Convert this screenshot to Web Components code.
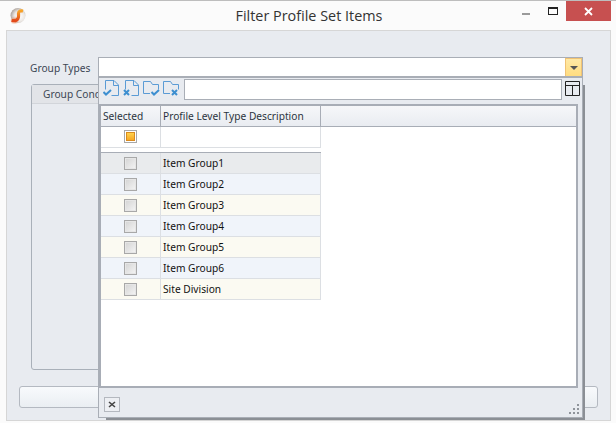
<!DOCTYPE html>
<html>
<head>
<meta charset="utf-8">
<title>Filter Profile Set Items</title>
<style>
    html, body { margin: 0; padding: 0; background: #fff; }
    body { font-family: "Noto Sans", "DejaVu Sans", sans-serif; font-size: 10.2px; color: #222; }
</style>
</head>
<body>
<filter-window title-text="Filter Profile Set Items"></filter-window>

<script>
class TitleBar extends HTMLElement {
    constructor() {
        super();
        this.attachShadow({ mode: 'open' });
    }

    connectedCallback() {
        this.shadowRoot.innerHTML = `
            <style>
                :host {
                    display: flex;
                    height: 29px;
                    border-top: 1px solid #bdbdbd;
                    background: #fbfbfb;
                    align-items: flex-start;
                }
                .logo { margin: 5px 0 0 10px; width: 16px; height: 18px; flex: none; }
                .title {
                    flex: 1;
                    text-align: center;
                    font: 14.4px/16px "Open Sans", "Liberation Sans", sans-serif;
                    color: #333;
                    margin-top: 7px;
                    padding-left: 70px;
                }
                .btns { display: flex; margin-right: 5px; }
                .min { width: 8px; height: 2px; background: #9a9a9a; margin: 12px 18px 0 0; }
                .max { width: 8px; height: 5px; border: 1px solid #222; border-top-width: 2px; margin: 6px 8px 0 0; }
                .close { width: 45px; height: 20px; background: #c75050; display: flex; align-items: center; justify-content: center; }
            </style>
            <svg class="logo" viewBox="0 0 16 18">
                <defs>
                    <radialGradient id="ball" cx="0.6" cy="0.55" r="0.62">
                        <stop offset="0" stop-color="#fff"/>
                        <stop offset="0.55" stop-color="#ece8e4"/>
                        <stop offset="1" stop-color="#a89e97"/>
                    </radialGradient>
                    <linearGradient id="ess" x1="0" y1="0" x2="0" y2="1">
                        <stop offset="0" stop-color="#f8a526"/>
                        <stop offset="1" stop-color="#e2481a"/>
                    </linearGradient>
                    <radialGradient id="glow" cx="0.5" cy="0.5" r="0.5">
                        <stop offset="0" stop-color="#f0743a" stop-opacity="0.75"/>
                        <stop offset="1" stop-color="#f0743a" stop-opacity="0"/>
                    </radialGradient>
                </defs>
                <circle cx="8" cy="9.500" r="7.500" fill="url(#ball)"/>
                <circle cx="4.500" cy="14.500" r="4.500" fill="url(#glow)"/>
                <path d="M13 5C10.500 4.500 8.500 5 8.500 7.500c0 2 .5 3-.5 5-.7 1.500-3.500 2.500-6.500 2" fill="none" stroke="url(#ess)" stroke-width="3.200"/>
            </svg>
            <div class="title"><slot></slot></div>
            <div class="btns">
                <div class="min"></div>
                <div class="max"></div>
                <div class="close">
                    <svg width="9" height="9" viewBox="0 0 9 9"><path d="M1 1l7 7M8 1l-7 7" stroke="#fff" stroke-width="1.800"/></svg>
                </div>
            </div>
        `;
    }
}

class ComboField extends HTMLElement {
    constructor() {
        super();
        this.attachShadow({ mode: 'open' });
    }

    connectedCallback() {
        this.shadowRoot.innerHTML = `
            <style>
                :host { display: flex; align-items: center; height: 21px; }
                .label { width: 68px; flex: none; color: #3c4654; white-space: nowrap; }
                .box {
                    flex: 1;
                    height: 19px;
                    border: 1px solid #a9aeb6;
                    background: #fff;
                    display: flex;
                    justify-content: flex-end;
                }
                .drop {
                    width: 15px;
                    height: 17px;
                    border: 1px solid #f0c274;
                    background: linear-gradient(#ffe9a6, #ffdc80);
                    display: flex;
                    align-items: center;
                    justify-content: center;
                }
                .drop i {
                    display: block;
                    width: 0; height: 0;
                    border-left: 4px solid transparent;
                    border-right: 4px solid transparent;
                    border-top: 4px solid #555;
                }
            </style>
            <div class="label"><slot></slot></div>
            <div class="box"><div class="drop"><i></i></div></div>
        `;
    }
}

class GroupBox extends HTMLElement {
    constructor() {
        super();
        this.attachShadow({ mode: 'open' });
    }

    connectedCallback() {
        this.shadowRoot.innerHTML = `
            <style>
                :host {
                    display: block;
                    height: 284px;
                    border: 1px solid #a9b0b9;
                    border-radius: 3px 3px 0 3px;
                    color: #3c4654;
                }
                .tab {
                    height: 18px;
                    line-height: 19px;
                    padding-left: 11px;
                    background: #e2e4e8;
                    border-bottom: 1px solid #d2d5da;
                }
            </style>
            <div class="tab"><slot></slot></div>
        `;
    }
}

class ToolIcon extends HTMLElement {
    constructor() {
        super();
        this.attachShadow({ mode: 'open' });
    }

    connectedCallback() {
        const shape = this.getAttribute('shape');
        const mark = this.getAttribute('mark');
        const outline = shape === 'doc'
            ? 'M2.500 9.500V.5h8.500l4.500 4.500v10.500H8.500M10.500.5v5h5'
            : 'M7 13.500H.5V1.500h7l2 3h6v5';
        const x = shape === 'doc' ? 0 : 8;
        const sign = mark === 'ok'
            ? `M${x + 0.5} 12l2.500 2.500 5-4.500`
            : `M${x + 1} 10l5 5M${x + 6} 10l-5 5`;
        this.shadowRoot.innerHTML = `
            <style>
                :host { display: block; width: 17px; height: 17px; }
                svg { display: block; }
            </style>
            <svg width="17" height="17" viewBox="0 0 17 17">
                <path d="${outline}" fill="none" stroke="#5a9bd5" stroke-width="1"/>
                <path d="${sign}" fill="none" stroke="#3d8fd0" stroke-width="2"/>
            </svg>
        `;
    }
}

class GridCheck extends HTMLElement {
    constructor() {
        super();
        this.attachShadow({ mode: 'open' });
    }

    connectedCallback() {
        const mixed = this.hasAttribute('mixed');
        this.shadowRoot.innerHTML = `
            <style>
                :host {
                    display: block;
                    width: 11px;
                    height: 11px;
                    border: 1px solid #a8a8a8;
                    background: #fff;
                }
                div {
                    box-sizing: border-box;
                    width: ${mixed ? '9px' : '11px'};
                    height: ${mixed ? '9px' : '11px'};
                    margin: ${mixed ? '1px' : '0'};
                    ${mixed
                        ? 'background: linear-gradient(#ffd24d, #f7a823); border: 1px solid #d98a1e;'
                        : 'background: linear-gradient(135deg, #d6d6d6, #f2f2f2); border: 1px solid #e6e6e6;'}
                }
            </style>
            <div></div>
        `;
    }
}

class GridRow extends HTMLElement {
    constructor() {
        super();
        this.attachShadow({ mode: 'open' });
    }

    connectedCallback() {
        const bg = this.getAttribute('bg') || '#fff';
        this.shadowRoot.innerHTML = `
            <style>
                :host {
                    display: grid;
                    grid-template-columns: 60px 160px;
                    height: 21px;
                    color: #111;
                }
                .c {
                    box-sizing: border-box;
                    background: ${bg};
                    border-right: 1px solid #dcdfe3;
                    border-bottom: 1px solid #dcdfe3;
                    display: flex;
                    align-items: center;
                }
                .sel { justify-content: center; }
                .txt { padding: 0 0 1px 2px; }
            </style>
            <div class="c sel"><grid-check></grid-check></div>
            <div class="c txt"><slot></slot></div>
        `;
    }
}

class ItemGrid extends HTMLElement {
    constructor() {
        super();
        this.attachShadow({ mode: 'open' });
    }

    connectedCallback() {
        this.shadowRoot.innerHTML = `
            <style>
                :host {
                    display: block;
                    height: 280px;
                    border: 2px solid #a8adb6;
                    background: #fff;
                    margin-right: 4px;
                }
                .head {
                    display: grid;
                    grid-template-columns: 60px 160px 1fr;
                    height: 21px;
                    box-sizing: border-box;
                    border-bottom: 1px solid #a8adb6;
                    background: linear-gradient(#f6f7f9, #e9ecf1);
                    color: #2c3440;
                }
                .head div {
                    border-right: 1px solid #a8adb6;
                    padding-left: 2px;
                    line-height: 20px;
                    white-space: nowrap;
                }
                .head div:last-child { border-right: 0; }
                .filter {
                    display: grid;
                    grid-template-columns: 60px 160px;
                    width: 220px;
                    height: 21px;
                    box-sizing: border-box;
                    border-bottom: 1px solid #dcdfe3;
                }
                .filter div {
                    box-sizing: border-box;
                    border-right: 1px solid #dcdfe3;
                    display: flex;
                    align-items: center;
                    justify-content: center;
                    padding-bottom: 1px;
                }
                .gap { width: 220px; height: 4px; border-bottom: 1px solid #a8adb6; }
            </style>
            <div class="head">
                <div>Selected</div>
                <div>Profile Level Type Description</div>
                <div></div>
            </div>
            <div class="filter">
                <div><grid-check mixed></grid-check></div>
                <div></div>
            </div>
            <div class="gap"></div>
            <slot></slot>
        `;
    }
}

class DropPopup extends HTMLElement {
    constructor() {
        super();
        this.attachShadow({ mode: 'open' });
    }

    connectedCallback() {
        this.shadowRoot.innerHTML = `
            <style>
                :host {
                    position: absolute;
                    left: 98px;
                    top: 76px;
                    width: 483px;
                    height: 339px;
                    background: #e8ebf0;
                    border: 1px solid #a9aeb6;
                    border-top-width: 2px;
                    display: flex;
                    flex-direction: column;
                }
                :host::before {
                    content: "";
                    position: absolute;
                    right: -3px;
                    top: 7px;
                    bottom: -3px;
                    width: 2px;
                    background: #8b8f95;
                }
                :host::after {
                    content: "";
                    position: absolute;
                    left: 7px;
                    right: -3px;
                    bottom: -3px;
                    height: 2px;
                    background: #8b8f95;
                }
                .tools {
                    height: 26px;
                    display: flex;
                    align-items: flex-start;
                    padding-left: 4px;
                    gap: 3px;
                }
                .tools tool-icon { margin-top: 2px; }
                .search {
                    box-sizing: border-box;
                    width: 378px;
                    height: 21px;
                    margin: 1px 0 0 1px;
                    background: #fff;
                    border: 1px solid #a9aeb6;
                }
                .layout { margin-top: 3px; }
                .foot { flex: 1; display: flex; justify-content: space-between; align-items: flex-start; }
                .closer {
                    box-sizing: border-box;
                    width: 16px;
                    height: 15px;
                    margin: 9px 0 0 5px;
                    border: 1px solid #b4b8bf;
                    background: #edeff3;
                    display: flex;
                    align-items: center;
                    justify-content: center;
                }
                .grip { margin: 16px 2px 0 0; }
            </style>
            <div class="tools">
                <tool-icon shape="doc" mark="ok"></tool-icon>
                <tool-icon shape="doc" mark="no"></tool-icon>
                <tool-icon shape="folder" mark="ok"></tool-icon>
                <tool-icon shape="folder" mark="no"></tool-icon>
                <div class="search"></div>
                <svg class="layout" width="16" height="16" viewBox="0 0 16 16">
                    <path d="M.5.5h14v14H.5zM.5 4.500h14M7.500 4.500v10" fill="none" stroke="#222"/>
                </svg>
            </div>
            <slot></slot>
            <div class="foot">
                <div class="closer">
                    <svg width="8" height="7" viewBox="0 0 8 7"><path d="M1 1l6 5M7 1L1 6" stroke="#444" stroke-width="1.600"/></svg>
                </div>
                <svg class="grip" width="11" height="11" viewBox="0 0 11 11" fill="#8f949b">
                    <rect x="8" y="0" width="2" height="2"/>
                    <rect x="4" y="4" width="2" height="2"/><rect x="8" y="4" width="2" height="2"/>
                    <rect x="0" y="8" width="2" height="2"/><rect x="4" y="8" width="2" height="2"/><rect x="8" y="8" width="2" height="2"/>
                </svg>
            </div>
        `;
    }
}

class FilterWindow extends HTMLElement {
    constructor() {
        super();
        this.attachShadow({ mode: 'open' });
    }

    connectedCallback() {
        const rows = [
            ['Item Group1', '#e9ebed'],
            ['Item Group2', '#f0f4fa'],
            ['Item Group3', '#fbfaf2'],
            ['Item Group4', '#f0f4fa'],
            ['Item Group5', '#fbfaf2'],
            ['Item Group6', '#f0f4fa'],
            ['Site Division', '#fbfaf2']
        ];
        this.shadowRoot.innerHTML = `
            <style>
                :host {
                    display: block;
                    position: relative;
                    width: 616px;
                    height: 423px;
                    background: #fbfbfb;
                    overflow: hidden;
                }
                .panel {
                    margin: 0 5px 0 6px;
                    height: 389px;
                    border: 1px solid #d6d6d6;
                    background: #e8ebf0;
                    display: flex;
                    flex-direction: column;
                }
                combo-field { margin: 26px 27px 0 23px; }
                group-box { margin: 6px 0 0 24px; width: 530px; }
                .ok {
                    box-sizing: border-box;
                    height: 22px;
                    margin: 16px 12px 0 12px;
                    border: 1px solid #b4b9c1;
                    border-radius: 3px;
                    background: linear-gradient(#f8fafc, #eaeef2);
                }
            </style>
            <title-bar>${this.getAttribute('title-text')}</title-bar>
            <div class="panel">
                <combo-field>Group Types</combo-field>
                <group-box>Group Conditions</group-box>
                <div class="ok"></div>
            </div>
            <drop-popup>
                <item-grid>
                    ${rows.map(([name, bg]) => `<grid-row bg="${bg}">${name}</grid-row>`).join('')}
                </item-grid>
            </drop-popup>
        `;
    }
}

customElements.define('title-bar', TitleBar);
customElements.define('combo-field', ComboField);
customElements.define('group-box', GroupBox);
customElements.define('tool-icon', ToolIcon);
customElements.define('grid-check', GridCheck);
customElements.define('grid-row', GridRow);
customElements.define('item-grid', ItemGrid);
customElements.define('drop-popup', DropPopup);
customElements.define('filter-window', FilterWindow);
</script>
</body>
</html>
